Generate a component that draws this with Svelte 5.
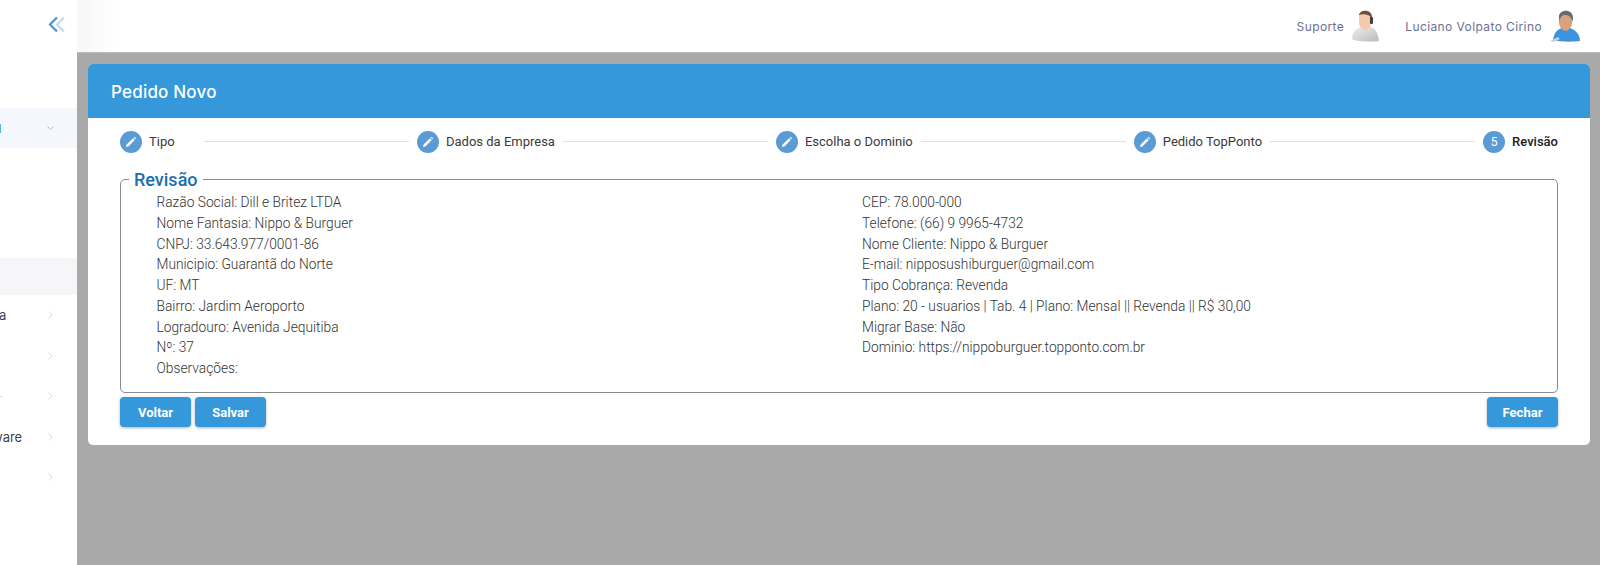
<script>
  const steps = ['Tipo', 'Dados da Empresa', 'Escolha o Dominio', 'Pedido TopPonto'];

  const left = [
    'Razão Social: Dill e Britez LTDA',
    'Nome Fantasia: Nippo & Burguer',
    'CNPJ: 33.643.977/0001-86',
    'Municipio: Guarantã do Norte',
    'UF: MT',
    'Bairro: Jardim Aeroporto',
    'Logradouro: Avenida Jequitiba',
    'Nº: 37',
    'Observações:'
  ];

  const right = [
    'CEP: 78.000-000',
    'Telefone: (66) 9 9965-4732',
    'Nome Cliente: Nippo & Burguer',
    'E-mail: nipposushiburguer@gmail.com',
    'Tipo Cobrança: Revenda',
    'Plano: 20 - usuarios | Tab. 4 | Plano: Mensal || Revenda || R$ 30,00',
    'Migrar Base: Não',
    'Dominio: https://nippoburguer.topponto.com.br'
  ];

  // the sidebar is almost collapsed, only the tail of each label shows
  const menu = [
    { label: 'a', cls: '' },
    { label: '', cls: '' },
    { label: '-', cls: 'faint' },
    { label: 'ware', cls: 'cut' },
    { label: '', cls: '' }
  ];
</script>

<div class="page">
  <aside class="sidebar">
    <div class="collapse">
      <svg width="18" height="17" viewBox="0 0 18 17" fill="none" stroke-width="2.2">
        <path d="M9 1.5 L2 8.5 L9 15.5" stroke="#4f93cf" />
        <path d="M16 1.5 L9 8.5 L16 15.5" stroke="#c3dbef" />
      </svg>
    </div>
    <div class="row active">
      <span class="mark"></span>
      <svg class="chev" width="7" height="5" viewBox="0 0 7 5" fill="none" stroke="#b3bccb" stroke-width="1">
        <path d="M0.5 0.5 L3.5 3.5 L6.5 0.5" />
      </svg>
    </div>
    <div class="shade"></div>
    <div class="menu">
      {#each menu as item}
        <div class="row">
          <span class="frag {item.cls}">{item.label}</span>
          <svg class="chev" width="5" height="8" viewBox="0 0 5 8" fill="none" stroke="#d5dae3" stroke-width="1">
            <path d="M0.5 0.5 L4 4 L0.5 7.5" />
          </svg>
        </div>
      {/each}
    </div>
  </aside>

  <main class="main">
    <header class="topbar">
      <span class="who">Suporte</span>
      <svg class="avatar" width="30" height="32" viewBox="0 0 30 32">
        <defs>
          <linearGradient id="shirt" x1="0" y1="0" x2="1" y2="1">
            <stop offset="0" stop-color="#efefed" />
            <stop offset="1" stop-color="#b9bcb8" />
          </linearGradient>
        </defs>
        <path d="M1 29 C1 21 6 18 10 17 L19 17 C24 18 27 22 28 31 C22 32 6 32 1 29 Z" fill="url(#shirt)" />
        <path d="M8 5 C8 2 20 2 20.500 6 L20 14 C19 18 16 20 14 20 C11 20 8.500 17 8 13 Z" fill="#f5c9ab" />
        <path d="M8 5 C9 -1 21 -1 21 7 L21 13 L19.500 13 L19 6 C15 4 11 4 8 5 Z" fill="#6d4f42" />
        <rect x="19" y="7" width="3" height="7" rx="1" fill="#3f3f3f" />
      </svg>
      <span class="who name">Luciano Volpato Cirino</span>
      <svg class="avatar" width="32" height="32" viewBox="0 0 32 32">
        <path d="M4 30 C5 22 9 19 13 18 L21 18 C27 20 31 25 31 31 C24 32 10 32 4 30 Z" fill="#3b94dc" />
        <path d="M10 6 C10 3 23 3 23.500 7 L23 14 C22 18 19 21 16.500 21 C13.500 21 10.500 17 10 13 Z" fill="#d9a27c" />
        <path d="M10 8 C9 -1 24 -2 24 8 L23.500 12 C22.500 6 19 5 16 5 C13 5 11 7 10.800 11 Z" fill="#666b6e" />
        <path d="M1 31 L9 27 L11 29 L5 32 Z" fill="#c9cfd3" />
      </svg>
    </header>

    <div class="content">
      <section class="card">
        <div class="card-head">Pedido Novo</div>
        <div class="card-body">
          <div class="stepper">
            {#each steps as step}
              <div class="step">
                <span class="dot">
                  <svg width="12" height="12" viewBox="0 0 12 12">
                    <path d="M1 11 L1.6 8.6 L8 2.2 L9.800 4 L3.400 10.400 Z M8.700 1.500 L9.600 0.800 L11.200 2.400 L10.500 3.300 Z" fill="#fff" />
                  </svg>
                </span>
                <span class="label">{step}</span>
              </div>
              <div class="line"></div>
            {/each}
            <div class="step">
              <span class="dot">5</span>
              <span class="label current">Revisão</span>
            </div>
          </div>

          <fieldset class="review">
            <legend>Revisão</legend>
            <div class="cols">
              <div class="col">
                {#each left as t}<p>{t}</p>{/each}
              </div>
              <div class="col">
                {#each right as t}<p>{t}</p>{/each}
              </div>
            </div>
          </fieldset>

          <div class="actions">
            <button>Voltar</button>
            <button>Salvar</button>
            <button class="end">Fechar</button>
          </div>
        </div>
      </section>
    </div>
  </main>
</div>

<style>
:global(body) {
  margin: 0;
}
.page {
  display: flex;
  width: 1600px;
  height: 565px;
  overflow: hidden;
  background: #a9a9a9;
  font-family: Roboto, "Liberation Sans", sans-serif;
}
.sidebar {
  width: 77px;
  flex: none;
  background: #fff;
  display: flex;
  flex-direction: column;
}
.collapse {
  height: 48px;
  padding-top: 16px;
  padding-left: 48px;
  box-sizing: border-box;
  margin-bottom: 44px;
}
.collapse svg {
  display: block;
}
.row {
  height: 40.5px;
  display: flex;
  align-items: center;
  justify-content: space-between;
  padding-right: 24px;
  box-sizing: border-box;
  font-family: Inter, sans-serif;
  font-size: 13px;
  color: #3f4254;
}
.row.active {
  height: 40px;
  background: #f4f8fc;
  margin-top: 16px;
  padding-right: 23px;
}
.mark {
  width: 1px;
  height: 9px;
  background: #54b5e6;
}
.shade {
  height: 37px;
  margin-top: 110px;
  background: #f6f6f8;
}
.frag {
  margin-left: -1px;
}
.frag.cut {
  margin-left: -8px;
}
.frag.faint {
  color: #d5dbea;
  margin-left: -3px;
}
.chev {
  display: block;
}
.main {
  flex: 1;
  min-width: 0;
  display: flex;
  flex-direction: column;
}
.topbar {
  height: 53px;
  flex: none;
  box-sizing: border-box;
  background: linear-gradient(90deg, #f7f7f7 0, #fff 40px);
  display: flex;
  align-items: center;
  justify-content: flex-end;
  padding-right: 19px;
  border-bottom: 1px solid #bdbdbd;
}
.who {
  font-family: Inter, sans-serif;
  font-size: 12px;
  letter-spacing: 0.4px;
  color: #6a6f94;
  margin-right: 7px;
}
.name {
  margin-left: 24px;
}
.avatar {
  display: block;
}
.content {
  padding: 11px 10px 0 11px;
}
.card {
  background: #fff;
  border-radius: 5px;
  overflow: hidden;
}
.card-head {
  height: 54px;
  box-sizing: border-box;
  background: #3498db;
  color: #fff;
  display: flex;
  align-items: center;
  padding: 1px 0 0 23px;
  font-family: Inter, sans-serif;
  font-size: 17px;
  letter-spacing: 0.2px;
  font-weight: 500;
}
.card-body {
  padding: 12px 32px 18px 32px;
}
.stepper {
  display: flex;
  align-items: center;
  height: 23px;
}
.step {
  display: flex;
  align-items: center;
  gap: 7px;
}
.step:first-child {
  min-width: 76px;
}
.dot {
  width: 22px;
  height: 22px;
  border-radius: 50%;
  background: #5a9bd5;
  color: #fff;
  font-size: 12px;
  display: flex;
  align-items: center;
  justify-content: center;
  flex: none;
}
.label {
  font-size: 13px;
  color: #3a3a3a;
}
.current {
  font-weight: 500;
  color: #222;
}
.line {
  flex: 1;
  height: 1px;
  background: #e0e0e0;
  margin: 0 8px;
}
.review {
  margin: 16px 0 0;
  padding: 0 0 12px 0;
  border: 1px solid #8a8a8a;
  border-radius: 5px;
  box-sizing: border-box;
  height: 224px;
}
legend {
  margin-left: 8px;
  padding: 0 5px;
  color: #1b6fae;
  font-size: 18px;
  font-weight: 500;
  line-height: 21px;
}
.cols {
  display: grid;
  grid-template-columns: 705.5px 1fr;
  margin-top: 2px;
  padding-left: 35.5px;
}
.col p {
  margin: 0;
  font-size: 13.75px;
  line-height: 20.75px;
  font-weight: 300;
  color: #333;
}
.actions {
  display: flex;
  gap: 4px;
  margin-top: 4px;
}
button {
  width: 71px;
  height: 30px;
  border: none;
  border-radius: 4px;
  background: #3498db;
  color: #fff;
  font-family: Roboto, sans-serif;
  font-size: 13px;
  font-weight: 700;
  box-shadow: 0 1px 3px rgba(0, 0, 0, 0.3);
}
.end {
  margin-left: auto;
}
</style>
